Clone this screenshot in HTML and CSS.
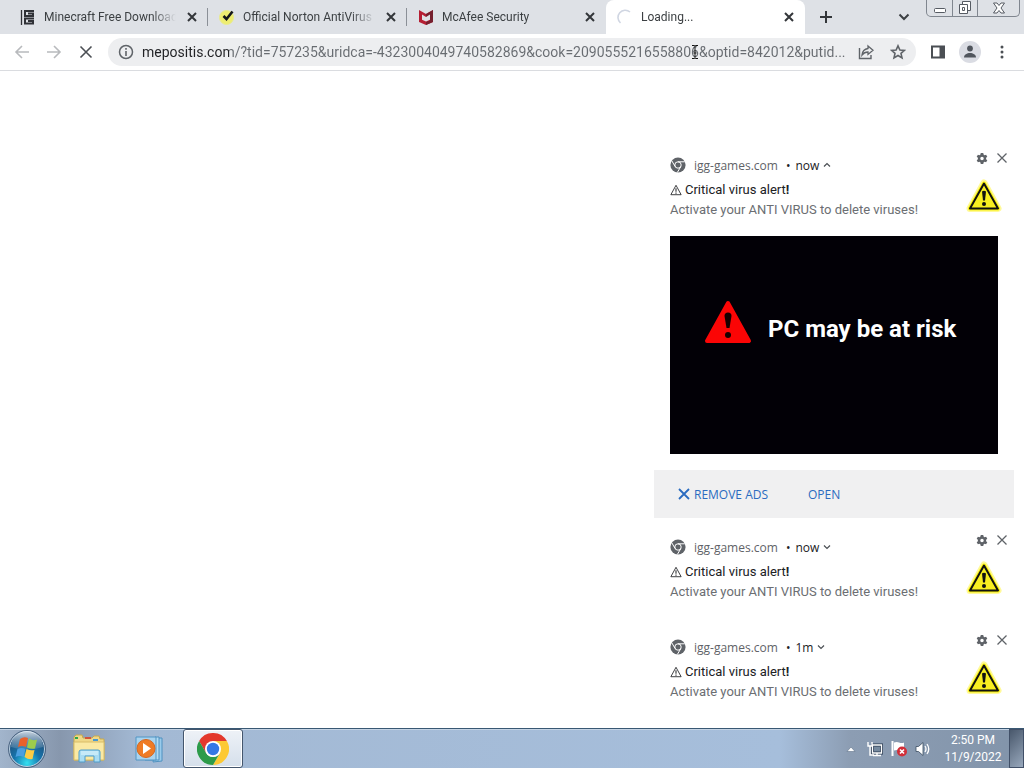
FILE: index.html
```html
<!DOCTYPE html>
<html lang="en">
<head>
<meta charset="utf-8">
<title>Loading...</title>
<link rel="stylesheet" href="styles.css">
</head>
<body>
<svg class="defs" width="0" height="0" aria-hidden="true">
  <symbol id="close" viewBox="0 0 16 16"><path d="M4 4l8 8M12 4l-8 8" fill="none" stroke="currentColor" stroke-width="2"/></symbol>
  <symbol id="dismiss" viewBox="0 0 16 16"><path d="M3.500 3.500l9 9M12.500 3.500l-9 9" fill="none" stroke="currentColor" stroke-width="1.300"/></symbol>
  <symbol id="chevron" viewBox="0 0 16 16"><path d="M4 6l4 4 4-4" fill="none" stroke="currentColor" stroke-width="1.600"/></symbol>
  <symbol id="gear" viewBox="0 0 24 24"><path fill="currentColor" fill-rule="evenodd" d="M9.500 2h5l.6 3.200 2 1.200 3.100-1.100 2.400 4.300-2.400 2.100v2.600l2.400 2.100-2.400 4.300-3.100-1.100-2 1.200-.6 3.200h-5l-.6-3.200-2-1.200-3.100 1.100-2.400-4.300 2.400-2.100v-2.600L1.400 9.600l2.400-4.300 3.100 1.100 2-1.200zM12 9.500a3.500 3.500 0 1 0 0 7 3.500 3.500 0 0 0 0-7z"/></symbol>
  <symbol id="site" viewBox="0 0 16 16"><circle cx="8" cy="8" r="7.600" fill="#5f6368"/><circle cx="8" cy="8" r="3.200" fill="none" stroke="#fff" stroke-width="1"/><path d="M8 4.800h6.800M5.200 9.600L1.900 4M10.800 9.600L7.300 15.500" stroke="#fff" stroke-width="1"/></symbol>
  <symbol id="hazard" viewBox="0 0 14 14"><path d="M7 1.500L13 12.500H1z" fill="none" stroke="currentColor"/><path d="M7 5v4M7 10v1.300" stroke="currentColor" stroke-width="1.200"/></symbol>
  <symbol id="alert" viewBox="0 0 40 40"><path d="M20 7L34 32.500H6z" fill="#fff33b" stroke="#fff200" stroke-width="7" stroke-linejoin="round" opacity=".4"/><path d="M20 7.500L34 32.500H6z" fill="#f8ee20" stroke="#f8f000" stroke-width="4" stroke-linejoin="round"/><path d="M20 7.500L34 32.500H6z" fill="#f8ee20" stroke="#111" stroke-width="2" stroke-linejoin="round"/><path d="M18 15.500q2-1.500 4 0l-1 9h-2z" fill="#111"/><circle cx="20" cy="28" r="2" fill="#111"/></symbol>
</svg>

<div class="screen">
  <header class="browser">
    <div class="strip">
      <div class="tabs">
        <div class="tab">
          <svg class="favicon" viewBox="0 0 16 16"><path d="M1.500 1v15" stroke="#2f3136" stroke-width="1.300"/><path d="M14 2H5v5h8V4.500H8" fill="none" stroke="#2f3136" stroke-width="2"/><path d="M14 9.500H5v5h8V12H8" fill="none" stroke="#2f3136" stroke-width="2"/></svg>
          <button class="tab-title">Minecraft Free Download</button>
          <button class="tab-close" aria-label="Close tab"><svg class="i16"><use href="#close"/></svg></button>
        </div>
        <div class="tab">
          <svg class="favicon" viewBox="0 0 16 16"><circle cx="7.500" cy="8.500" r="7" fill="#eeed70" stroke="#e8eb90"/><path d="M4.500 7l3 3 6-7.500" fill="none" stroke="#15181b" stroke-width="2.600"/></svg>
          <button class="tab-title">Official Norton AntiVirus</button>
          <button class="tab-close" aria-label="Close tab"><svg class="i16"><use href="#close"/></svg></button>
        </div>
        <div class="tab">
          <svg class="favicon" viewBox="0 0 16 16"><path d="M1 1l7 4 7-4v12l-7 3-7-3z" fill="#b51e33"/><path d="M8 5l7-4v12l-7 3v-3l4-1.500V6L8 8.500z" fill="#76202f"/><path d="M4 5.500l4 2.500 4-2.500v5.300L8 12.500l-4-1.700z" fill="#dee1e6"/></svg>
          <button class="tab-title">McAfee Security</button>
          <button class="tab-close" aria-label="Close tab"><svg class="i16"><use href="#close"/></svg></button>
        </div>
        <div class="tab active">
          <svg class="favicon" viewBox="0 0 16 16"><path d="M3.500 14A7 7 0 0 1 13 3" fill="none" stroke="#d0d6e2" stroke-width="1.600"/></svg>
          <button class="tab-title">Loading...</button>
          <button class="tab-close" aria-label="Close tab"><svg class="i16"><use href="#close"/></svg></button>
        </div>
      </div>
      <button class="new-tab" aria-label="New tab"><svg class="i16" viewBox="0 0 16 16"><path d="M8 2v12M2 8h12" stroke="currentColor" stroke-width="2"/></svg></button>
      <button class="tab-search" aria-label="Search tabs"><svg class="i16" viewBox="0 0 16 16"><path d="M3.500 5.500L8 10l4.500-4.500" fill="none" stroke="currentColor" stroke-width="2"/></svg></button>
      <div class="window-controls">
        <button aria-label="Minimize"><svg class="i16" viewBox="0 0 16 16"><rect x="2.500" y="8.500" width="11" height="4" rx="1" fill="#fff" stroke="#565b63"/></svg></button>
        <button aria-label="Restore"><svg class="i16" viewBox="0 0 16 16"><path d="M5.500 1.500h8v9h-8z" fill="#fff" stroke="#565b63"/><path d="M2.500 4.500h8v9h-8z" fill="#fff" stroke="#565b63"/><path d="M5.500 7.500h2v3h-2z" fill="none" stroke="#565b63"/></svg></button>
        <button aria-label="Close"><svg class="i16" viewBox="0 0 16 16"><path d="M2.500 3h3.500l2 2.500 2-2.500h3.500L10 8l3.500 5H10l-2-2.500L6 13H2.500L6 8z" fill="#fff" stroke="#565b63"/></svg></button>
      </div>
    </div>
    <div class="toolbar">
      <button class="tool faded" aria-label="Back"><svg class="i16" viewBox="0 0 16 16"><path d="M15 8H2M8 2L2 8l6 6" fill="none" stroke="currentColor" stroke-width="1.600"/></svg></button>
      <button class="tool faded" aria-label="Forward"><svg class="i16" viewBox="0 0 16 16"><path d="M1 8h13M8 2l6 6-6 6" fill="none" stroke="currentColor" stroke-width="1.600"/></svg></button>
      <button class="tool" aria-label="Stop"><svg class="i16" viewBox="0 0 16 16"><path d="M2.500 2.500l11 11M13.500 2.500l-11 11" stroke="currentColor" stroke-width="1.600"/></svg></button>
      <div class="omnibox">
        <button class="pill-btn" aria-label="Site information"><svg class="i16" viewBox="0 0 16 16"><circle cx="8" cy="8" r="6.500" fill="none" stroke="currentColor" stroke-width="1.500"/><path d="M8 7v5M8 4v1.800" stroke="currentColor" stroke-width="1.600"/></svg></button>
        <input class="url" type="text" aria-label="Address" value="mepositis.com/?tid=757235&amp;uridca=-4323004049740582869&amp;cook=2090555216558806&amp;optid=842012&amp;putid...">
        <button class="pill-btn share" aria-label="Share"><svg class="i16" viewBox="0 0 16 16"><path d="M1.500 4v10.500H13V11" fill="none" stroke="currentColor" stroke-width="1.400"/><path d="M10 2l5 4.200-5 4.200V8c-3 0-4.500 1-6 3 .4-4 2.500-6 6-6.500z" fill="none" stroke="currentColor" stroke-width="1.300"/></svg></button>
        <button class="pill-btn" aria-label="Bookmark"><svg class="i16" viewBox="0 0 16 16"><path d="M8 1.800l1.900 4.200 4.500.4-3.400 3 1 4.500L8 11.500l-4 2.400 1-4.500-3.400-3 4.500-.4z" fill="none" stroke="currentColor" stroke-width="1.600"/></svg></button>
        <svg class="ibeam" viewBox="0 0 8 16" aria-hidden="true"><path d="M1 1.500h2.500l.5.500.5-.5H7M1 14.500h2.500l.5-.500.5.500H7M4 2v12M2.500 9h3" fill="none" stroke="#111"/></svg>
      </div>
      <button class="tool" aria-label="Side panel"><svg class="i16" viewBox="0 0 16 16"><path d="M2 2.500h12v11H2z" fill="none" stroke="currentColor" stroke-width="2"/><path d="M9.500 2.500H14v11H9.500z" fill="currentColor"/></svg></button>
      <button class="tool" aria-label="Profile"><svg class="avatar" viewBox="0 0 22 22"><circle cx="11" cy="11" r="11" fill="#dadce3"/><circle cx="11" cy="7.500" r="2.900" fill="#50555d"/><path d="M5 16.500c0-6 12-6 12 0z" fill="#50555d"/></svg></button>
      <button class="tool" aria-label="Menu"><svg class="i16" viewBox="0 0 16 16"><g fill="currentColor"><circle cx="8" cy="3" r="1.500"/><circle cx="8" cy="8" r="1.500"/><circle cx="8" cy="13" r="1.500"/></g></svg></button>
    </div>
  </header>

  <main class="page">
    <section class="notices" aria-label="Notifications">
      <article class="notice">
        <div class="row">
          <div class="body">
            <div class="source"><svg class="i16"><use href="#site"/></svg><span class="origin">igg-games.com</span><span class="dot">•</span><span>now</span><button class="toggle up" aria-label="Collapse"><svg class="i12"><use href="#chevron"/></svg></button></div>
            <h2 class="title"><svg class="i12"><use href="#hazard"/></svg><span>Critical virus alert<b>!</b></span></h2>
            <p class="message">Activate your ANTI VIRUS to delete viruses!</p>
          </div>
          <div class="side">
            <div class="controls"><button aria-label="Settings"><svg class="i12"><use href="#gear"/></svg></button><button aria-label="Close"><svg class="i16"><use href="#dismiss"/></svg></button></div>
            <svg class="alert"><use href="#alert"/></svg>
          </div>
        </div>
        <div class="banner">
          <svg class="risk" viewBox="0 0 48 44"><path d="M24 3L45 41H3z" fill="#fb0505" stroke="#fb0505" stroke-width="4" stroke-linejoin="round"/><path d="M20.500 16q0-3.500 3.500-3.500t3.500 3.500l-2 12h-3z" fill="#160000"/><circle cx="24" cy="35" r="3" fill="#160000"/></svg>
          <span>PC may be at risk</span>
        </div>
        <div class="actions">
          <button><svg class="i16" viewBox="0 0 16 16"><path d="M3 3l10 10M13 3L3 13" stroke="currentColor" stroke-width="1.800"/></svg>REMOVE ADS</button>
          <button>OPEN</button>
        </div>
      </article>
      <article class="notice">
        <div class="row">
          <div class="body">
            <div class="source"><svg class="i16"><use href="#site"/></svg><span class="origin">igg-games.com</span><span class="dot">•</span><span>now</span><button class="toggle" aria-label="Expand"><svg class="i12"><use href="#chevron"/></svg></button></div>
            <h2 class="title"><svg class="i12"><use href="#hazard"/></svg><span>Critical virus alert<b>!</b></span></h2>
            <p class="message">Activate your ANTI VIRUS to delete viruses!</p>
          </div>
          <div class="side">
            <div class="controls"><button aria-label="Settings"><svg class="i12"><use href="#gear"/></svg></button><button aria-label="Close"><svg class="i16"><use href="#dismiss"/></svg></button></div>
            <svg class="alert"><use href="#alert"/></svg>
          </div>
        </div>
      </article>
      <article class="notice">
        <div class="row">
          <div class="body">
            <div class="source"><svg class="i16"><use href="#site"/></svg><span class="origin">igg-games.com</span><span class="dot">•</span><span>1m</span><button class="toggle" aria-label="Expand"><svg class="i12"><use href="#chevron"/></svg></button></div>
            <h2 class="title"><svg class="i12"><use href="#hazard"/></svg><span>Critical virus alert<b>!</b></span></h2>
            <p class="message">Activate your ANTI VIRUS to delete viruses!</p>
          </div>
          <div class="side">
            <div class="controls"><button aria-label="Settings"><svg class="i12"><use href="#gear"/></svg></button><button aria-label="Close"><svg class="i16"><use href="#dismiss"/></svg></button></div>
            <svg class="alert"><use href="#alert"/></svg>
          </div>
        </div>
      </article>
    </section>
  </main>

  <footer class="taskbar">
    <button class="start" aria-label="Start">
      <svg class="orb" viewBox="0 0 38 38">
        <defs>
          <radialGradient id="orb" cx=".5" cy=".9" r=".85"><stop offset="0" stop-color="#35e0f0"/><stop offset=".45" stop-color="#1674ac"/><stop offset="1" stop-color="#24466c"/></radialGradient>
          <linearGradient id="gloss" x2="0" y2="1"><stop offset="0" stop-color="#e8f1f8" stop-opacity=".85"/><stop offset="1" stop-color="#9cb8d0" stop-opacity=".2"/></linearGradient>
        </defs>
        <circle cx="19" cy="19" r="17.500" fill="url(#orb)" stroke="#bdd2e4"/><circle cx="19" cy="19" r="18.500" fill="none" stroke="#355170" stroke-width=".8"/>
        <path d="M3 17a16 16 0 0 1 32 0q-16 5-32 0z" fill="url(#gloss)"/>
        <path d="M12 9q4-3 8-1l-2 9q-4-2-8 0z" fill="#ea612b"/><path d="M21 8.500q4 3 8 1l-2 9q-4 1-8-1z" fill="#9dcc4c"/><path d="M9.500 19q4-2 8 0l-2 8q-4-2-8 0z" fill="#4b9fe0"/><path d="M18.500 19q4 2 8 1l-2 9q-4 1-8-2z" fill="#fdcc45"/>
      </svg>
    </button>
    <button class="task" aria-label="File Explorer">
      <svg class="app" viewBox="0 0 32 32"><path d="M1 4l2-2h6l1 3h9l2-2h5l1 3h4v21H1z" fill="#efd887" stroke="#c7a94e"/><path d="M2 4h3v2H2z" fill="#2da64a"/><path d="M12 4h6v2h-6z" fill="#d1553d"/><path d="M20 6h5v2h-5z" fill="#4798d0"/><path d="M1 9h30v18H1z" fill="#fae9a3" stroke="#d8bd68"/><path d="M6 29V19q0-2 2-2h17q2 0 2 2v10h-6v-6h-9v6z" fill="#a9dcf2" stroke="#4e9dca"/><path d="M8 19h17M8 21h17" stroke="#e4f7fd"/></svg>
    </button>
    <button class="task" aria-label="Media Player">
      <svg class="app" viewBox="0 0 32 32"><path d="M24 5h5v23l-9 1z" fill="#9acbeb" stroke="#4f91c0"/><path d="M22 4h4v23H12z" fill="#b4dcf3" stroke="#4f91c0"/><path d="M3 4h20v23H3z" fill="#a9d3ee" stroke="#5095c4"/><circle cx="13" cy="15.500" r="9" fill="#ef7b25" stroke="#d46720"/><path d="M10 10l8 5.500-8 5.500z" fill="#fff"/></svg>
    </button>
    <button class="task current" aria-label="Google Chrome">
      <svg class="app" viewBox="0 0 32 32"><path d="M16 8h13.860a16 16 0 0 1-13.860 24l7-12z" fill="#fcc934"/><path d="M2.140 8A16 16 0 0 1 29.860 8H16l-7 12z" fill="#e3382c"/><path d="M2.140 8l7 12a8 8 0 0 0 13.800 0L16 32A16 16 0 0 1 2.140 8z" fill="#2d9b4a"/><circle cx="16" cy="16" r="8" fill="#fff"/><circle cx="16" cy="16" r="6.200" fill="#3478e5"/></svg>
    </button>
    <div class="tray">
      <button aria-label="Show hidden icons"><svg class="i16" viewBox="0 0 16 16"><path d="M4 10.500l4-4.500 4 4.500z" fill="#fff" stroke="#4f627a" stroke-width=".5"/></svg></button>
      <button aria-label="Network"><svg class="i16" viewBox="0 0 16 16"><path d="M5.500 4h9v8h-9z" fill="#75899e" stroke="#26384f" stroke-width="3"/><path d="M5.500 4h9v8h-9zM10 12v3M6 14.500h8" fill="none" stroke="#fff" stroke-width="1.400"/><path d="M1 1v4h4V1M3 5v9h4" fill="none" stroke="#fff" stroke-width="1.400"/></svg></button>
      <button aria-label="Action Center"><svg class="i16" viewBox="0 0 16 16"><path d="M1.500 0v15" stroke="#fff" stroke-width="2"/><path d="M3 1.500q3-1 5 0 3 1 5 0v8q-3 1-5 0-2-1-5 0z" fill="#fff"/><circle cx="11" cy="10.500" r="5" fill="#d12e38"/><path d="M9 8.500l4 4M13 8.500l-4 4" stroke="#fff" stroke-width="1.600"/></svg></button>
      <button aria-label="Volume"><svg class="i16" viewBox="0 0 16 16"><path d="M1 5.500h2.500L8 1.500v13l-4.500-4H1z" fill="#fff" stroke="#394b61" stroke-width=".8"/><path d="M10 5q2 3 0 6M12 3q3.500 5 0 10" fill="none" stroke="#fff" stroke-width="1.300"/></svg></button>
      <div class="clock"><time>2:50 PM</time><time>11/9/2022</time></div>
      <button class="desktop" aria-label="Show desktop"></button>
    </div>
  </footer>
</div>
</body>
</html>
```
FILE: styles.css
```css
* { box-sizing: border-box; }
body { margin: 0; font-family: "Open Sans", "Noto Sans", sans-serif; font-size: 12px; color: #202124; background: #fff; }
button { display: inline-flex; align-items: center; justify-content: center; padding: 0; border: 0; background: none; color: inherit; font: inherit; }
svg { display: block; flex: none; }
.defs { position: absolute; }
.i16 { width: 16px; height: 16px; }
.i12 { width: 12px; height: 12px; }
.screen { min-height: 100vh; display: flex; flex-direction: column; }

.strip { height: 34px; display: flex; background: #dee1e6; color: #3c4043; }
.tabs { display: flex; flex: 0 1 796px; min-width: 0; margin-left: 9px; }
.tab { flex: 1 1 0; min-width: 0; display: flex; align-items: center; gap: 8px; padding: 0 8px 0 11px; background: linear-gradient(#8b9097, #8b9097) right center / 1px 18px no-repeat; }
.tab:nth-child(3) { background: none; }
.tab.active { background: #fff; border-radius: 8px 8px 0 0; }
.favicon { width: 16px; height: 16px; }
.tab-title { flex: 1; min-width: 0; justify-content: flex-start; overflow: hidden; white-space: nowrap; font-family: Roboto, "Open Sans", sans-serif; line-height: 20px; mask-image: linear-gradient(to right, #000 calc(100% - 24px), transparent); }
.tab-close { color: #33363a; }
.new-tab { width: 42px; color: #33363a; }
.tab-search { width: 32px; margin-left: auto; }
.window-controls { display: flex; height: 17px; margin: 0 4px 0 6px; border: 1px solid #80868f; border-top: 0; border-radius: 0 0 5px 5px; overflow: hidden; }
.window-controls button { width: 25px; }
.window-controls button + button { border-left: 1px solid #80868f; }
.window-controls button:last-child { width: 42px; }

.toolbar { display: flex; align-items: center; height: 37px; padding: 0 6px; border-bottom: 1px solid #dadce0; }
.tool { width: 32px; height: 32px; color: #4b4f54; }
.faded { color: #b8babd; }
.avatar { width: 22px; height: 22px; }
.omnibox { position: relative; flex: 1; min-width: 0; display: flex; align-items: center; height: 28px; margin: 0 6px; padding: 0 10px; gap: 8px; border-radius: 14px; background: #edeef0; color: #5f6368; }
.pill-btn { width: 16px; }
.share { margin-right: 8px; }
.url { flex: 1; min-width: 0; padding: 0; border: 0; outline: 0; font: 14px/20px Roboto, "Open Sans", sans-serif; color: transparent; background: linear-gradient(to right, #202124 87px, #686c71 87px); background-clip: text; }
.ibeam { position: absolute; left: 583px; top: 6px; width: 8px; height: 16px; }

.page { flex: 1; display: flex; justify-content: flex-end; align-items: flex-end; padding: 10px; }
.notices { width: 360px; display: flex; flex-direction: column; gap: 10px; }
.notice { background: #fff; }
.row { display: flex; justify-content: space-between; height: 90px; padding: 4px 4px 0 16px; }
.source { display: flex; align-items: center; height: 30px; gap: 8px; font-size: 12px; }
.origin { color: #5f6368; }
.source .dot { margin-right: -3px; }
.toggle { margin-left: -6px; color: #4b4f54; }
.up { transform: rotate(180deg); }
.title { display: flex; align-items: center; height: 20px; margin: 0; font: 13px/20px Roboto, "Open Sans", sans-serif; gap: 3px; }
.message { margin: 0; font: 13px/20px Roboto, "Open Sans", sans-serif; color: #6b6e72; white-space: nowrap; }
.side { display: flex; flex-direction: column; align-items: flex-end; }
.controls { display: flex; align-items: center; height: 16px; gap: 6px; color: #5f6368; }
.alert { width: 40px; height: 40px; margin: 10px 6px 0 0; }
.banner { display: flex; align-items: center; height: 218px; margin: 0 16px; padding: 0 34px 32px; gap: 16px; background: #020006; color: #fff; font: bold 24px/32px Roboto, "Liberation Sans", sans-serif; white-space: nowrap; }
.risk { width: 48px; height: 44px; margin-bottom: 14px; }
.actions { display: flex; align-items: center; height: 48px; margin-top: 16px; padding: 0 22px; gap: 40px; background: #f0f0f1; color: #2a6bc0; font-size: 12px; }
.actions button { gap: 2px; }

.taskbar { display: flex; height: 40px; border-top: 1px solid #395873; box-shadow: inset 0 1px #c5d4e5; background: linear-gradient(to right, #a2b5cc 0, #8797ad 60px, #a3b9d4 140px, #a6bedb 780px, #8c9db3 850px, #8294aa 100%); }
.start { width: 54px; margin-right: 5px; }
.orb { width: 38px; height: 38px; }
.task { width: 60px; border-radius: 3px; }
.current { margin-left: 4px; border: 1px solid #44566d; background: linear-gradient(#eef2f7, #d5dfeb); box-shadow: inset 0 0 0 1px #fff; }
.app { width: 32px; height: 32px; }
.tray { display: flex; align-items: center; margin-left: auto; gap: 8px; color: #fff; }
.clock { display: flex; flex-direction: column; align-items: center; width: 68px; font-family: Roboto, "Open Sans", sans-serif; line-height: 17px; }
.desktop { align-self: stretch; width: 15px; border: 1px solid #415068; background: linear-gradient(135deg, #49586c, #98a8bc); margin-left: -6px; }
```
